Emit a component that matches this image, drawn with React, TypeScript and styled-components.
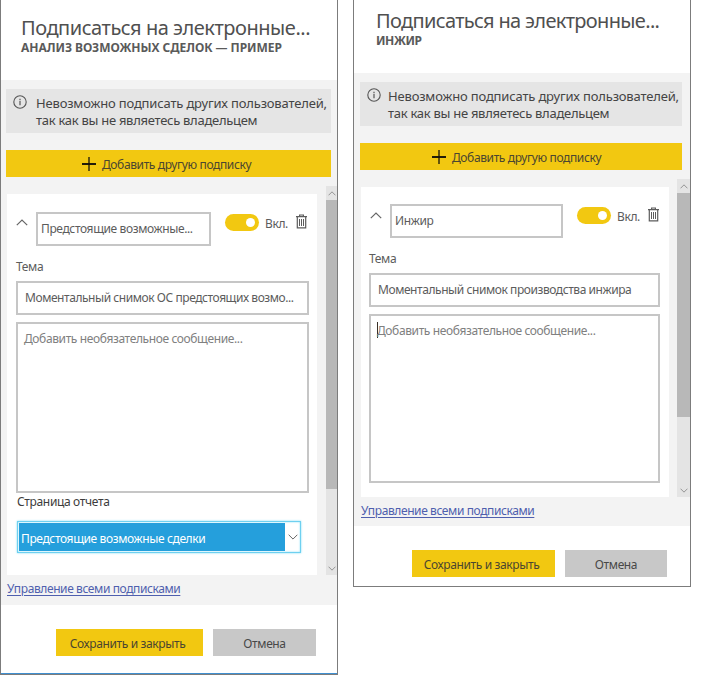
import React from "react";
import styled, { createGlobalStyle } from "styled-components";

const GlobalStyle = createGlobalStyle`
  *, *::before, *::after { box-sizing: border-box; }
  html, body { margin: 0; background: #fff; overflow: hidden; }
  body { font-family: "Noto Sans", "Open Sans", sans-serif; font-size: 12px; color: #4a4a4a; }
`;

const Page = styled.main`
  display: flex;
  align-items: flex-start;
  gap: 15px;
  width: 701px;
  height: 675px;
`;

const Panel = styled.section<{ $width: number; $height: number; $accent?: boolean }>`
  display: flex;
  flex-direction: column;
  flex: none;
  width: ${(p) => p.$width}px;
  height: ${(p) => p.$height}px;
  border: 1px solid #7c7c7c;
  border-top: 0;
  box-shadow: ${(p) => (p.$accent ? "inset 0 -1px 0 #3f8fd0" : "none")};
`;

const Text = styled.span<{ $ls?: number }>`
  display: block;
  white-space: nowrap;
  letter-spacing: ${(p) => p.$ls ?? -0.38}px;
`;

const Header = styled.header<{ $height: number; $top: number; $left: number }>`
  flex: none;
  height: ${(p) => p.$height}px;
  padding: ${(p) => p.$top}px 0 0 ${(p) => p.$left}px;
`;

const Title = styled.h1<{ $ls: number }>`
  margin: 0;
  font-size: 20px;
  line-height: 26px;
  font-weight: 400;
  letter-spacing: ${(p) => p.$ls}px;
  white-space: nowrap;
  color: #505050;
`;

const Subtitle = styled.h2<{ $ls: number }>`
  margin: 0;
  font-size: 12px;
  line-height: 14px;
  font-weight: 700;
  letter-spacing: ${(p) => p.$ls}px;
  white-space: nowrap;
  color: #5a5a5a;
`;

const Body = styled.div<{ $height: number; $left: number }>`
  flex: none;
  display: flex;
  flex-direction: column;
  height: ${(p) => p.$height}px;
  padding: 9px 0 0 ${(p) => p.$left}px;
  background: #f3f3f3;
`;

const Notice = styled.div<{ $width: number; $gap: number }>`
  flex: none;
  display: flex;
  gap: ${(p) => p.$gap}px;
  width: ${(p) => p.$width}px;
  height: 44px;
  padding: 6px 0 0 7px;
  background: #e5e5e5;
  color: #444;
  font-size: 13px;
  line-height: 17px;
  svg { flex: none; }
`;

const AddButton = styled.button<{ $width: number; $pad: number }>`
  flex: none;
  display: flex;
  align-items: center;
  gap: 6px;
  width: ${(p) => p.$width}px;
  height: 27px;
  margin: 17px 0 9px;
  padding: 1px 0 0 ${(p) => p.$pad}px;
  border: 0;
  background: #f2c811;
  color: #4b4630;
  font: inherit;
`;

const ScrollRegion = styled.div<{ $height: number }>`
  flex: none;
  display: flex;
  justify-content: space-between;
  height: ${(p) => p.$height}px;
`;

const Card = styled.article<{ $width: number; $pad: number }>`
  width: ${(p) => p.$width}px;
  margin: 8px 0 0 1px;
  padding: 18px 0 0 ${(p) => p.$pad}px;
  background: #fff;
  color: #5c5c5c;
`;

const Scrollbar = styled.div<{ $width: number }>`
  display: flex;
  flex-direction: column;
  align-items: center;
  width: ${(p) => p.$width}px;
  background: #e4e4e4;
`;

const Thumb = styled.div<{ $height: number }>`
  flex: none;
  width: 100%;
  height: ${(p) => p.$height}px;
  margin-bottom: auto;
  background: #b8b8b8;
`;

const ScrollArrow = styled.div`
  flex: none;
  display: flex;
  align-items: center;
  justify-content: center;
  height: 14px;
`;

const CardTop = styled.div<{ $raise: number }>`
  display: flex;
  align-items: flex-start;
  height: ${(p) => 34 - p.$raise}px;
`;

const Collapse = styled.div<{ $width: number; $pad: number }>`
  flex: none;
  width: ${(p) => p.$width}px;
  padding: 7px 0 0 ${(p) => p.$pad}px;
  svg { display: block; }
`;

const Field = styled.div<{ $width: number; $height: number; $pad: number }>`
  flex: none;
  display: flex;
  align-items: center;
  width: ${(p) => p.$width}px;
  height: ${(p) => p.$height}px;
  padding: 0 0 1px ${(p) => p.$pad}px;
  border: 2px solid #c6c6c6;
  background: #fff;
`;

const NameField = styled(Field)<{ $raise: number }>`
  margin-top: ${(p) => -p.$raise}px;
`;

const Message = styled(Field)`
  align-items: flex-start;
  margin-top: 7px;
  padding-top: 6px;
  color: #808080;
`;

const Caret = styled.i`
  width: 1px;
  height: 16px;
  margin: 0 -1px 0 0;
  background: #3a3028;
`;

const Toggle = styled.div`
  flex: none;
  display: flex;
  justify-content: flex-end;
  width: 34px;
  height: 17px;
  margin: 2px 6px 0 14px;
  padding: 4px 4px;
  border-radius: 9px;
  background: #f2c811;
  &::after {
    content: "";
    width: 9px;
    height: 9px;
    border-radius: 50%;
    background: #fff;
  }
`;

const ToggleLabel = styled(Text)`
  width: 31px;
  padding-top: 3px;
  line-height: 18px;
`;

const TrashButton = styled.div`
  padding-top: 2px;
  svg { display: block; }
`;

const Label = styled(Text)`
  height: 35px;
  padding-top: 12px;
  line-height: 18px;
`;

const PageLabel = styled(Text)`
  padding: 0 0 0 1px;
  line-height: 17px;
  height: 28px;
  color: #3c3c3c;
`;

const Select = styled.div`
  display: flex;
  width: 284px;
  height: 32px;
  margin-left: 1px;
  padding: 1px 0 0 1px;
  border: 1px solid #6ed0f0;
  box-shadow: 0 0 2px #80dcf5, inset 0 0 2px #80dcf5;
`;

const SelectValue = styled(Text)`
  width: 266px;
  height: 28px;
  padding: 2px 0 0 2px;
  background: #259fdc;
  color: #fff;
  line-height: 28px;
`;

const SelectArrow = styled.div`
  flex: 1;
  display: flex;
  align-items: center;
  justify-content: center;
  padding-bottom: 2px;
`;

const ManageLink = styled.a`
  display: block;
  width: max-content;
  margin: 5px 0 0 1px;
  line-height: 17px;
  letter-spacing: -0.4px;
  text-decoration: underline;
  text-underline-offset: 2px;
  color: #4f5fae;
`;

const Footer = styled.footer<{ $left: number }>`
  display: flex;
  gap: 10px;
  padding: 24px 0 0 ${(p) => p.$left}px;
`;

const Action = styled.button<{ $width: number; $primary?: boolean }>`
  width: ${(p) => p.$width}px;
  height: 27px;
  padding: 2px ${(p) => (p.$primary ? 4 : 0)}px 0 0;
  border: 0;
  background: ${(p) => (p.$primary ? "#f2c811" : "#c8c8c8")};
  color: ${(p) => (p.$primary ? "#4b4630" : "#484848")};
  font: inherit;
  letter-spacing: -0.37px;
  white-space: nowrap;
`;

const InfoIcon = () => (
  <svg width="14" height="14" viewBox="0 0 14 14" fill="none" stroke="#555">
    <circle cx="7" cy="7" r="6.2" strokeWidth="1.1" />
    <path d="M7 5.8v4.4M7 3.7v1.2" strokeWidth="1.2" />
  </svg>
);

const PlusIcon = () => (
  <svg width="14" height="14" viewBox="0 0 14 14" stroke="#17140a" fill="none">
    <path d="M0 7h14" strokeWidth="1.9" />
    <path d="M7 0v14" strokeWidth="1.3" />
  </svg>
);

const Chevron = ({ w, down, color = "#666" }: { w: number; down?: boolean; color?: string }) => (
  <svg width={w} height={w / 2 + 1} viewBox="0 0 12 7" fill="none" stroke={color} strokeWidth="1.2">
    <path d={down ? "M.8 .8 6 6 11.2.8" : "M.8 6.2 6 1l5.2 5.2"} />
  </svg>
);

const TrashIcon = () => (
  <svg width="11" height="15" viewBox="0 0 11 15" fill="none" stroke="#5c5c5c">
    <path d="M0 2.7h11M3.6 2.4V1h3.8v1.4" strokeWidth="1.2" />
    <path d="M1.3 3v10.9h8.4V3" strokeWidth="1.2" />
    <path d="M3.5 5v7M5.5 5v7M7.5 5v7" strokeWidth="1" />
  </svg>
);

interface PanelData {
  width: number;
  height: number;
  accent?: boolean;
  head: { height: number; top: number; left: number; ls: number };
  subtitle: string;
  subLs: number;
  body: { height: number; left: number };
  barWidth: number;
  noticeGap: number;
  addPad: number;
  region: number;
  cardWidth: number;
  cardPad: number;
  collapse: { width: number; pad: number };
  raise: number;
  scrollWidth: number;
  thumb: number;
  name: string;
  nameWidth: number;
  subject: string;
  subjectLs: number;
  subjectPad: number;
  fieldWidth: number;
  messageHeight: number;
  messagePad: number;
  focused?: boolean;
  reportPage?: string;
  footLeft: number;
  saveWidth: number;
  cancelWidth: number;
}

const panels: PanelData[] = [
  {
    width: 338, height: 675, accent: true,
    head: { height: 80, top: 15, left: 20, ls: -0.46 },
    subtitle: "АНАЛИЗ ВОЗМОЖНЫХ СДЕЛОК — ПРИМЕР", subLs: -0.05,
    body: { height: 525, left: 5 }, barWidth: 325, noticeGap: 9, addPad: 76,
    region: 389, cardWidth: 310, cardPad: 9, collapse: { width: 20, pad: 0 }, raise: 0,
    scrollWidth: 11, thumb: 289, name: "Предстоящие возможные...", nameWidth: 175,
    subject: "Моментальный снимок ОС предстоящих возмо...", subjectLs: -0.44, subjectPad: 7,
    fieldWidth: 293, messageHeight: 171, messagePad: 6, reportPage: "Предстоящие возможные сделки",
    footLeft: 55, saveWidth: 147, cancelWidth: 103,
  },
  {
    width: 338, height: 587,
    head: { height: 73, top: 8, left: 22, ls: -0.66 },
    subtitle: "ИНЖИР", subLs: -0.4,
    body: { height: 453, left: 6 }, barWidth: 322, noticeGap: 7, addPad: 72,
    region: 318, cardWidth: 308, cardPad: 8, collapse: { width: 21, pad: 1 }, raise: 1,
    scrollWidth: 13, thumb: 224, name: "Инжир", nameWidth: 173,
    subject: "Моментальный снимок производства инжира", subjectLs: -0.43, subjectPad: 7,
    fieldWidth: 291, messageHeight: 169, messagePad: 6, focused: true,
    footLeft: 58, saveWidth: 143, cancelWidth: 102,
  },
];

const SubscriptionPanel = ({ d }: { d: PanelData }) => (
  <Panel $width={d.width} $height={d.height} $accent={d.accent}>
    <Header $height={d.head.height} $top={d.head.top} $left={d.head.left}>
      <Title $ls={d.head.ls}>Подписаться на электронные...</Title>
      <Subtitle $ls={d.subLs}>{d.subtitle}</Subtitle>
    </Header>
    <Body $height={d.body.height} $left={d.body.left}>
      <Notice $width={d.barWidth} $gap={d.noticeGap}>
        <InfoIcon />
        <div>
          <Text $ls={-0.17}>Невозможно подписать других пользователей,</Text>
          <Text $ls={-0.28}>так как вы не являетесь владельцем</Text>
        </div>
      </Notice>
      <AddButton $width={d.barWidth} $pad={d.addPad}>
        <PlusIcon />
        <Text>Добавить другую подписку</Text>
      </AddButton>
      <ScrollRegion $height={d.region}>
        <Card $width={d.cardWidth} $pad={d.cardPad}>
          <CardTop $raise={d.raise}>
            <Collapse $width={d.collapse.width} $pad={d.collapse.pad}><Chevron w={12} /></Collapse>
            <NameField $width={d.nameWidth} $height={34} $pad={3} $raise={d.raise}>
              <Text>{d.name}</Text>
            </NameField>
            <Toggle />
            <ToggleLabel>Вкл.</ToggleLabel>
            <TrashButton><TrashIcon /></TrashButton>
          </CardTop>
          <Label>Тема</Label>
          <Field $width={d.fieldWidth} $height={34} $pad={d.subjectPad}>
            <Text $ls={d.subjectLs}>{d.subject}</Text>
          </Field>
          <Message $width={d.fieldWidth} $height={d.messageHeight} $pad={d.messagePad}>
            {d.focused && <Caret />}
            <Text>Добавить необязательное сообщение...</Text>
          </Message>
          {d.reportPage && (
            <>
              <PageLabel $ls={-0.34}>Страница отчета</PageLabel>
              <Select>
                <SelectValue>{d.reportPage}</SelectValue>
                <SelectArrow><Chevron w={10} down /></SelectArrow>
              </Select>
            </>
          )}
        </Card>
        <Scrollbar $width={d.scrollWidth}>
          <ScrollArrow><Chevron w={8} color="#808080" /></ScrollArrow>
          <Thumb $height={d.thumb} />
          <ScrollArrow><Chevron w={8} down color="#808080" /></ScrollArrow>
        </Scrollbar>
      </ScrollRegion>
      <ManageLink>Управление всеми подписками</ManageLink>
    </Body>
    <Footer $left={d.footLeft}>
      <Action $primary $width={d.saveWidth}>Сохранить и закрыть</Action>
      <Action $width={d.cancelWidth}>Отмена</Action>
    </Footer>
  </Panel>
);

export default function App() {
  return (
    <>
      <GlobalStyle />
      <Page>
        {panels.map((d) => <SubscriptionPanel key={d.subtitle} d={d} />)}
      </Page>
    </>
  );
}
